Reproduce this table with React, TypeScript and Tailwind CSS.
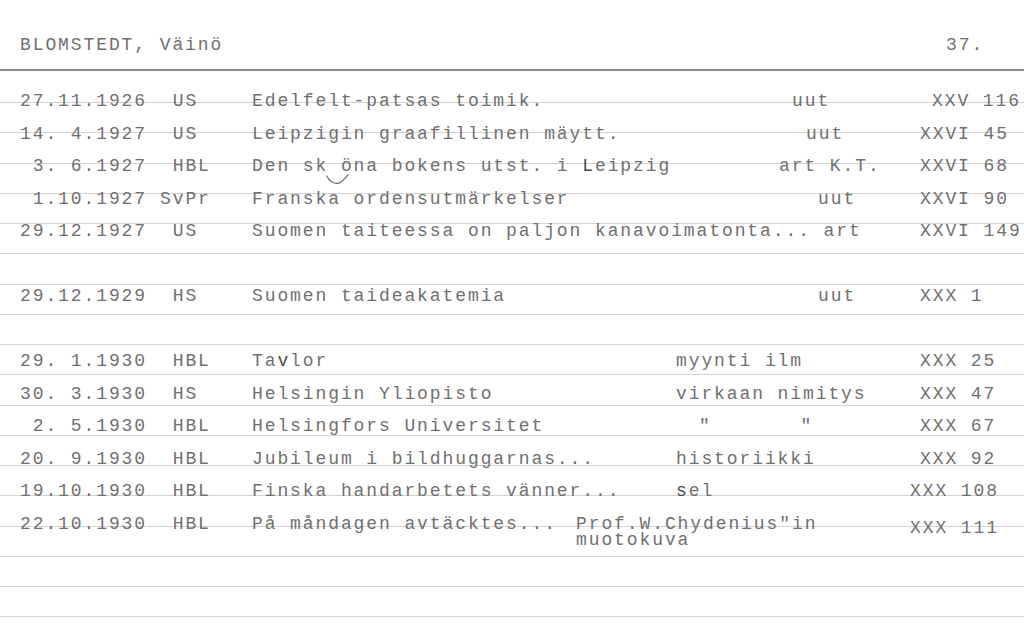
import React from "react";

type Row = {
  date?: string;
  paper?: string;
  desc?: React.ReactNode;
  type?: React.ReactNode;
  typeCls?: string;
  ref?: string;
  refCls?: string;
};

const dark = "text-[#4a4a4a]";

const rows: Row[] = [
  { date: "27.11.1926", paper: " US", desc: "Edelfelt-patsas toimik.", type: "uut", typeCls: "pl-[216px]", ref: "XXV 116", refCls: "ml-[12px]" },
  { date: "14. 4.1927", paper: " US", desc: "Leipzigin graafillinen mäytt.", type: "uut", typeCls: "pl-[230px]", ref: "XXVI 45", refCls: "" },
  {
    date: " 3. 6.1927",
    paper: " HBL",
    desc: (
      <>
        Den sk öna bokens utst. i <span className={dark}>L</span>eipzig
      </>
    ),
    type: "art K.T.",
    typeCls: "pl-[203px]",
    ref: "XXVI 68",
    refCls: "",
  },
  { date: " 1.10.1927", paper: "SvPr", desc: "Franska ordensutmärkelser", type: "uut", typeCls: "pl-[242px]", ref: "XXVI 90", refCls: "" },
  { date: "29.12.1927", paper: " US", desc: "Suomen taiteessa on paljon kanavoimatonta... art", type: "", typeCls: "", ref: "XXVI 149", refCls: "" },
  {},
  { date: "29.12.1929", paper: " HS", desc: "Suomen taideakatemia", type: "uut", typeCls: "pl-[242px]", ref: "XXX 1", refCls: "" },
  {},
  {
    date: "29. 1.1930",
    paper: " HBL",
    desc: (
      <>
        Ta<span className={dark}>v</span>lor
      </>
    ),
    type: "myynti ilm",
    typeCls: "pl-[100px]",
    ref: "XXX 25",
    refCls: "",
  },
  { date: "30. 3.1930", paper: " HS", desc: "Helsingin Yliopisto", type: "virkaan nimitys", typeCls: "pl-[100px]", ref: "XXX 47", refCls: "" },
  { date: " 2. 5.1930", paper: " HBL", desc: "Helsingfors Universitet", type: "\"       \"", typeCls: "pl-[123px]", ref: "XXX 67", refCls: "" },
  { date: "20. 9.1930", paper: " HBL", desc: "Jubileum i bildhuggarnas...", type: "historiikki", typeCls: "pl-[100px]", ref: "XXX 92", refCls: "" },
  {
    date: "19.10.1930",
    paper: " HBL",
    desc: "Finska handarbetets vänner...",
    type: (
      <>
        <span className={dark}>s</span>el
      </>
    ),
    typeCls: "pl-[100px]",
    ref: "XXX 108",
    refCls: "-ml-[10px]",
  },
  {
    date: "22.10.1930",
    paper: " HBL",
    desc: "På måndagen avtäcktes...",
    type: (
      <div className="pt-[8px] leading-[16px]">
        <div>Prof.W.Chydenius"in</div>
        <div>muotokuva</div>
      </div>
    ),
    typeCls: "",
    ref: "XXX 111",
    refCls: "-ml-[10px] pt-[4px]",
  },
];

export default function App() {
  return (
    <div
      className="relative w-[1024px] h-[630px] overflow-hidden bg-white text-[#707070] text-[18px] tracking-[1.9px]"
      style={{ fontFamily: '"Liberation Mono", "DejaVu Sans Mono", monospace' }}
    >
      {/* header */}
      <div className="flex h-[69px] pt-[29px] pl-[20px] leading-[32.5px] whitespace-pre">
        <div className="w-[926px]">BLOMSTEDT, Väinö</div>
        <div>37.</div>
      </div>
      <div className="h-[2px] bg-[#8c8c8c]" />

      {/* body */}
      <div className="grid grid-cols-1">
        {/* ruled lines */}
        <div className="col-start-1 row-start-1 flex flex-col">
          <div className="h-[32px] shrink-0 border-b border-[#cfcfcf]" />
          {Array.from({ length: 17 }).map((_, i) => (
            <div key={i} className="h-[30.25px] shrink-0 border-b border-[#d2d2d2]" />
          ))}
        </div>

        {/* typed rows */}
        <div className="col-start-1 row-start-1 flex flex-col pt-[14px]">
          {rows.map((r, i) => (
            <div key={i} className="relative flex h-[32.5px] shrink-0 items-start pl-[20px] leading-[32.5px] whitespace-pre">
              {r.date !== undefined && (
                <>
                  <div className="w-[140px] shrink-0">{r.date}</div>
                  <div className="w-[92px] shrink-0">{r.paper}</div>
                  <div className="w-[324px] shrink-0">{r.desc}</div>
                  <div className={`w-[344px] shrink-0 ${r.typeCls}`}>{r.type}</div>
                  <div className={`shrink-0 ${r.refCls}`}>{r.ref}</div>
                </>
              )}
              {i === 2 && (
                <svg
                  className="absolute left-[325px] top-[23px]"
                  width="26"
                  height="14"
                  viewBox="0 0 26 14"
                  fill="none"
                >
                  <path d="M2 3 C 5 10, 12 12, 16 9 C 19 7, 21 4, 23 2" stroke="#6a6a6a" strokeWidth="1.2" strokeLinecap="round" />
                </svg>
              )}
            </div>
          ))}
        </div>
      </div>
    </div>
  );
}
